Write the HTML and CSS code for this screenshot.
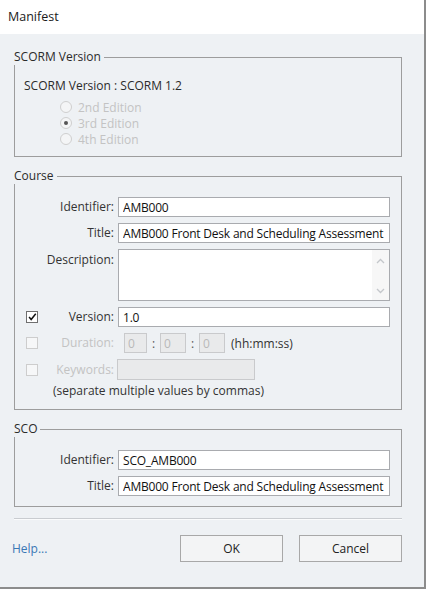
FILE: index.html
```html
<!DOCTYPE html>
<html lang="en">
<head>
  <meta charset="UTF-8">
  <title>Manifest</title>
  <link rel="stylesheet" href="styles.css">
</head>
<body>
  <div class="window">
    <div class="titlebar">Manifest</div>

    <div class="content">
      <!-- SCORM version -->
      <fieldset class="group group-version">
        <legend>SCORM Version</legend>
        <div class="version-text">SCORM Version : SCORM 1.2</div>
        <div class="editions">
          <div class="radio"><span class="radio-circle"></span>2nd Edition</div>
          <div class="radio"><span class="radio-circle checked"></span>3rd Edition</div>
          <div class="radio"><span class="radio-circle"></span>4th Edition</div>
        </div>
      </fieldset>

      <!-- Course -->
      <fieldset class="group group-course">
        <legend>Course</legend>
        <div class="form-grid">
          <span></span>
          <span class="field-label">Identifier:</span>
          <input class="text-input" type="text" value="AMB000" readonly>

          <span></span>
          <span class="field-label">Title:</span>
          <input class="text-input" type="text" value="AMB000 Front Desk and Scheduling Assessment" readonly>

          <span></span>
          <span class="field-label label-top">Description:</span>
          <div class="textarea">
            <div class="textarea-body"></div>
            <div class="scrollbar">
              <svg width="9" height="6" viewBox="0 0 9 6"><path d="M1 5 L4.5 1.5 L8 5" fill="none" stroke="#c4c7cb" stroke-width="1.3"/></svg>
              <svg width="9" height="6" viewBox="0 0 9 6"><path d="M1 1 L4.5 4.5 L8 1" fill="none" stroke="#c4c7cb" stroke-width="1.3"/></svg>
            </div>
          </div>

          <span class="checkbox checked">
            <svg width="12" height="12" viewBox="0 0 12 12"><path d="M2.5 6 L5 9 L10.5 2" fill="none" stroke="#111" stroke-width="1.8"/></svg>
          </span>
          <span class="field-label">Version:</span>
          <input class="text-input" type="text" value="1.0" readonly>

          <span class="checkbox"></span>
          <span class="field-label disabled">Duration:</span>
          <div class="duration">
            <input class="text-input small off" type="text" value="0" readonly>
            <span class="colon">:</span>
            <input class="text-input small wide off" type="text" value="0" readonly>
            <span class="colon">:</span>
            <input class="text-input small wide off" type="text" value="0" readonly>
            <span class="unit">(hh:mm:ss)</span>
          </div>

          <span class="checkbox"></span>
          <span class="field-label disabled">Keywords:</span>
          <div class="keywords">
            <input class="text-input off" type="text" value="" readonly>
          </div>

          <span class="hint">(separate multiple values by commas)</span>
        </div>
      </fieldset>

      <!-- SCO -->
      <fieldset class="group group-sco">
        <legend>SCO</legend>
        <div class="form-grid">
          <span></span>
          <span class="field-label">Identifier:</span>
          <input class="text-input" type="text" value="SCO_AMB000" readonly>

          <span></span>
          <span class="field-label">Title:</span>
          <input class="text-input" type="text" value="AMB000 Front Desk and Scheduling Assessment" readonly>
        </div>
      </fieldset>

      <div class="separator"></div>

      <div class="footer">
        <a class="help" href="#">Help...</a>
        <div class="buttons">
          <button class="btn">OK</button>
          <button class="btn">Cancel</button>
        </div>
      </div>
    </div>
  </div>
</body>
</html>
```

FILE: styles.css
```css
* {
  margin: 0;
  padding: 0;
  box-sizing: border-box;
}

body {
  background: #fff;
  font-family: 'Open Sans', 'Noto Sans', sans-serif;
  font-size: 12px;
  color: #2b2b2b;
}

.window {
  width: 426px;
  height: 589px;
  border-right: 2px solid #8c8c8c;
  border-bottom: 2px solid #8c8c8c;
  display: flex;
  flex-direction: column;
}

.titlebar {
  height: 34px;
  background: #fff;
  padding-left: 8px;
  line-height: 34px;
  font-size: 12.5px;
  color: #1a1a1a;
}

.content {
  flex: 1;
  background: #eef1f4;
  padding: 15px 22px 0 14px;
}

/* group boxes */
.group {
  border: 1px solid #9d9d9d;
  padding: 0 11px 0 11px;
  margin-bottom: 11px;
}

.group legend {
  margin-left: -12px;
  padding: 0 3px 0 0;
  line-height: 16px;
  color: #2b2b2b;
}

.group-version {
  padding: 13px 10px 9px 9px;
}

.group-version legend {
  margin-left: -10px;
}

.version-text {
  line-height: 16px;
}

.editions {
  margin-top: 5px;
  padding-left: 36px;
  color: #c3c3c3;
}

.radio {
  display: flex;
  align-items: center;
  height: 16px;
  gap: 6px;
}

.radio-circle {
  width: 12px;
  height: 12px;
  border: 1px solid #cfcfcf;
  border-radius: 50%;
  background: #f4f5f6;
  display: flex;
  align-items: center;
  justify-content: center;
}

.radio-circle.checked::after {
  content: '';
  width: 4px;
  height: 4px;
  border-radius: 50%;
  background: #555;
}

.group-course {
  padding-top: 13px;
  padding-bottom: 10px;
}

.group-sco {
  padding-top: 13px;
  padding-bottom: 10px;
}

/* form rows */
.form-grid {
  display: grid;
  grid-template-columns: 12px 80px 1fr;
  row-gap: 6px;
  align-items: center;
}

.field-label {
  text-align: right;
  padding-right: 4px;
  color: #333;
  line-height: 16px;
}

.field-label.label-top {
  align-self: start;
  padding-top: 3px;
}

.field-label.disabled {
  color: #c3c3c3;
}

.text-input {
  height: 20px;
  width: 100%;
  border: 1px solid #a9abaf;
  background: #fff;
  font: inherit;
  letter-spacing: -0.2px;
  color: #111;
  padding: 0 3px 0 4px;
  outline: none;
}

.text-input.off {
  background: #e9eaeb;
  border-color: #c9cacc;
  color: #b9b9b9;
}

.textarea {
  height: 52px;
  border: 1px solid #a9abaf;
  background: #fff;
  display: flex;
}

.textarea-body {
  flex: 1;
}

.scrollbar {
  width: 17px;
  background: #f7f7f7;
  display: flex;
  flex-direction: column;
  justify-content: space-between;
  align-items: center;
  padding: 8px 0 6px;
}

.checkbox {
  width: 12px;
  height: 12px;
  border: 1px solid #cdcdcd;
  background: #f6f7f8;
  display: flex;
  align-items: center;
  justify-content: center;
}

.checkbox.checked {
  border-color: #6f6f6f;
  background: #fff;
}

.duration {
  display: flex;
  align-items: center;
  padding-left: 6px;
}

.text-input.small {
  width: 23px;
  padding: 0 3px;
}

.text-input.small.wide {
  width: 26px;
}

.colon {
  width: 13px;
  text-align: center;
  color: #555;
}

.unit {
  margin-left: 6px;
  color: #333;
}

.keywords {
  margin-left: -1px;
}

.keywords .text-input {
  width: 138px;
  height: 21px;
}

.hint {
  grid-column: 1 / 4;
  padding-left: 27px;
  margin-top: -3px;
  line-height: 16px;
  color: #333;
}

/* footer */
.separator {
  border-top: 1px solid #c9ccd0;
  border-bottom: 1px solid #fafbfc;
}

.footer {
  display: flex;
  align-items: center;
  justify-content: space-between;
  margin-top: 15px;
}

.help {
  color: #3a78b5;
  text-decoration: none;
  margin-left: -2px;
}

.buttons {
  display: flex;
  gap: 16px;
}

.btn {
  width: 103px;
  height: 27px;
  border: 1px solid #a8a8a8;
  background: #f3f4f5;
  font: inherit;
  color: #222;
  cursor: pointer;
}

.btn:hover {
  background: #e5f1fb;
}
```
